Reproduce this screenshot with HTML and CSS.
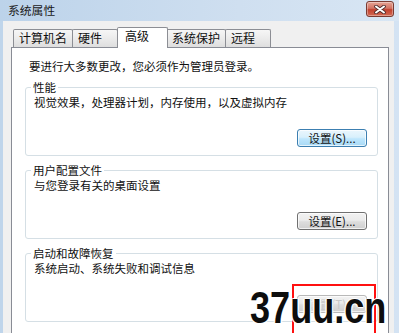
FILE: index.html
```html
<!DOCTYPE html>
<html lang="zh-CN">
<head>
    <meta charset="UTF-8">
    <meta name="viewport" content="width=device-width, initial-scale=1.0">
    <title>系统属性</title>
    <link rel="stylesheet" href="styles.css">
</head>
<body>
    <div class="window">
        <div class="titlebar">
            <span class="title">系统属性</span>
            <button class="close-btn" aria-label="关闭">
                <svg width="12" height="9" viewBox="0 0 12 9">
                    <path d="M2 1.5 L10 7.5 M10 1.5 L2 7.5" stroke="#4a2a2a" stroke-width="3.6" stroke-linecap="round"/>
                    <path d="M2 1.5 L10 7.5 M10 1.5 L2 7.5" stroke="#fff" stroke-width="2" stroke-linecap="round"/>
                </svg>
            </button>
        </div>
        <div class="dialog">
            <div class="tabs">
                <div class="tab">计算机名</div>
                <div class="tab">硬件</div>
                <div class="tab active">高级</div>
                <div class="tab">系统保护</div>
                <div class="tab">远程</div>
            </div>
            <div class="panel">
                <p class="intro">要进行大多数更改，您必须作为管理员登录。</p>

                <div class="group">
                    <span class="group-title">性能</span>
                    <p class="group-desc">视觉效果，处理器计划，内存使用，以及虚拟内存</p>
                    <button class="btn btn-default">设置(S)...</button>
                </div>

                <div class="group">
                    <span class="group-title">用户配置文件</span>
                    <p class="group-desc">与您登录有关的桌面设置</p>
                    <button class="btn">设置(E)...</button>
                </div>

                <div class="group">
                    <span class="group-title">启动和故障恢复</span>
                    <p class="group-desc">系统启动、系统失败和调试信息</p>
                    <button class="btn btn-hidden">设置(T)...</button>
                </div>
            </div>
        </div>

        <!-- watermark stamped over the screenshot -->
        <div class="stamp-box"></div>
        <div class="stamp">37uu.cn</div>
    </div>
</body>
</html>
```

FILE: styles.css
```css
body {
    margin: 0;
    font-family: "Noto Sans CJK SC", "Liberation Sans", sans-serif;
    font-size: 11.5px;
    color: #111;
}
p {
    margin: 0;
}
.window {
    position: relative;
    width: 399px;
    height: 333px;
    overflow: hidden;
    display: flex;
    flex-direction: column;
    background: linear-gradient(to right, #bfd5eb, #d4e3f3);
}
.titlebar {
    height: 21px;
    display: flex;
    align-items: center;
    justify-content: space-between;
    padding: 0 5px 0 8px;
    box-sizing: border-box;
    background: linear-gradient(to right, #bcd3ea, #cfdff0 60%, #d8e6f4);
}
.title {
    font-size: 11.8px;
    color: #1a1a1a;
    line-height: 14px;
    margin-top: -2px;
}
.close-btn {
    width: 28px;
    height: 16px;
    margin-top: -3px;
    padding: 0;
    border: 1px solid #7a3b32;
    border-radius: 3px;
    background: linear-gradient(#e6a596, #d27363 45%, #c2412f 55%, #d36a54);
    display: flex;
    align-items: center;
    justify-content: center;
    box-shadow: inset 0 0 0 1px rgba(255, 255, 255, 0.35);
}
.dialog {
    flex: 1;
    margin: 0 5px 0 3px;
    padding: 6px 5px 0 8px;
    background: #f0f0f0;
    display: flex;
    flex-direction: column;
}
.tabs {
    display: flex;
    align-items: flex-end;
    height: 20px;
    margin-left: 2px;
}
.tab {
    box-sizing: border-box;
    height: 18px;
    min-width: 46px;
    padding: 0 5px;
    margin-left: -1px;
    line-height: 16px;
    border: 1px solid #8c8e94;
    border-bottom: none;
    border-radius: 2px 2px 0 0;
    background: linear-gradient(#f6f6f6, #ebebeb 50%, #dedede);
    color: #111;
    font-size: 12px;
}
.tab:first-child {
    margin-left: 0;
}
.tab.active {
    position: relative;
    z-index: 1;
    height: 21px;
    min-width: 51px;
    padding: 0 7px;
    margin-right: -1px;
    margin-bottom: -1px;
    line-height: 16px;
    background: #fff;
}
.panel {
    flex: 1;
    background: #fff;
    border: 1px solid #898c95;
    border-bottom: none;
    padding: 11px 10px 0 13px;
    display: flex;
    flex-direction: column;
    gap: 14px;
}
.intro {
    line-height: 14px;
    padding-left: 4px;
}
.group {
    box-sizing: border-box;
    height: 69px;
    border: 1px solid #d5dfe5;
    border-radius: 3px;
    padding: 0 0 8px 0;
    display: flex;
    flex-direction: column;
}
.group-title {
    align-self: flex-start;
    margin: -8px 0 0 5px;
    padding: 0 2px;
    line-height: 14px;
    background: #fff;
}
.group-desc {
    line-height: 14px;
    margin-top: 1px;
    padding-left: 8px;
}
.btn {
    align-self: flex-end;
    margin-top: auto;
    margin-right: 10px;
    width: 70px;
    height: 18px;
    padding: 0;
    font-family: inherit;
    font-size: 11.5px;
    line-height: 14px;
    color: #111;
    border: 1px solid #707070;
    border-radius: 3px;
    background: linear-gradient(#f2f2f2, #ebebeb 45%, #dddddd 55%, #cfcfcf);
    box-shadow: inset 0 0 0 1px rgba(255, 255, 255, 0.7);
}
.btn-default {
    border-color: #3c7fb1;
    background: linear-gradient(#eaf6fd, #d9f0fc 45%, #bee6fd 55%, #a7d9f5);
}
/* third button sits under the watermark and barely shows */
.btn-hidden {
    color: #c8c8c8;
    border-color: #b8b8b8;
}
.stamp-box {
    position: absolute;
    left: 292px;
    top: 284px;
    width: 80px;
    height: 60px;
    border: 2px solid #ff1010;
    border-bottom: none;
}
.stamp {
    position: absolute;
    left: 250px;
    top: 286px;
    font-family: "Liberation Sans", sans-serif;
    font-weight: bold;
    font-size: 44px;
    line-height: 1;
    color: #0d0d0d;
    transform: scaleX(0.82);
    transform-origin: left top;
    text-shadow: 1px 0 0 #fff, -1px 0 0 #fff, 0 1px 0 #fff, 0 -1px 0 #fff,
        2px 0 1px rgba(255, 255, 255, 0.7), -2px 0 1px rgba(255, 255, 255, 0.7);
}
```
